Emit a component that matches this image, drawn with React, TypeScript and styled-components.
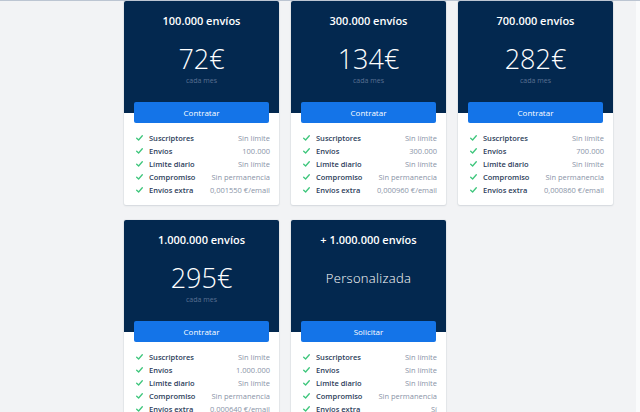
import styled, { createGlobalStyle } from "styled-components";

const GlobalStyle = createGlobalStyle`
  html, body {
    margin: 0;
    padding: 0;
    height: 100%;
    overflow: hidden;
  }
  body {
    background: linear-gradient(to right, #f2f3f5 636px, #fafbfc 636px);
    font-family: "Open Sans", "Liberation Sans", sans-serif;
    border-top: 1px solid #bcc5d2;
    box-sizing: border-box;
  }
`;

const Grid = styled.div`
  display: grid;
  grid-template-columns: repeat(3, 155px);
  column-gap: 12px;
  row-gap: 15px;
  padding-left: 124px;
`;

const Card = styled.div`
  background: #fff;
  border-radius: 2px;
  box-shadow: 0 1px 2px rgba(30, 45, 70, 0.1), 0 0 0 1px rgba(30, 45, 70, 0.04);
`;

const Header = styled.div`
  height: 112px;
  box-sizing: border-box;
  padding-top: 13px;
  background: #03284f;
  border-radius: 2px 2px 0 0;
  display: flex;
  flex-direction: column;
  align-items: center;
  color: #fff;
`;

const Title = styled.div`
  font-size: 11px;
  line-height: 14px;
  font-weight: 600;
`;

const Price = styled.div<{ $small?: boolean }>`
  margin-top: ${({ $small }) => ($small ? "22px" : "16px")};
  font-size: ${({ $small }) => ($small ? "13px" : "27px")};
  line-height: ${({ $small }) => ($small ? "18px" : "30px")};
  font-weight: 300;
  letter-spacing: ${({ $small }) => ($small ? "0.3px" : "0")};
`;

const Period = styled.div`
  margin-top: 2px;
  font-size: 7px;
  line-height: 10px;
  color: #5a7092;
`;

const Button = styled.button`
  display: block;
  width: 135px;
  height: 21px;
  margin: -11px 0 0 10px;
  border: none;
  border-radius: 2px;
  background: #1474e8;
  color: #fff;
  font-family: inherit;
  font-size: 8px;
  padding: 0;
  position: relative;
`;

const List = styled.ul`
  list-style: none;
  margin: 0;
  padding: 9px 9px 9px 12px;
`;

const Row = styled.li`
  display: flex;
  align-items: center;
  height: 12.8px;
  font-size: 7.5px;
`;

const Label = styled.span`
  margin-left: 6px;
  color: #2c3d5a;
  font-weight: 600;
`;

const Value = styled.span`
  margin-left: auto;
  color: #8a94a7;
`;

const Check = () => (
  <svg width="7" height="6" viewBox="0 0 7 6">
    <polyline
      points="0.7,3.2 2.6,5 6.3,0.8"
      fill="none"
      stroke="#3ec67c"
      strokeWidth="1.3"
      strokeLinecap="round"
      strokeLinejoin="round"
    />
  </svg>
);

type Plan = {
  title: string;
  price: string;
  custom?: boolean;
  action: string;
  values: string[];
};

const labels = [
  "Suscriptores",
  "Envíos",
  "Límite diario",
  "Compromiso",
  "Envíos extra",
];

const plans: Plan[] = [
  {
    title: "100.000 envíos",
    price: "72€",
    action: "Contratar",
    values: ["Sin límite", "100.000", "Sin límite", "Sin permanencia", "0,001550 €/email"],
  },
  {
    title: "300.000 envíos",
    price: "134€",
    action: "Contratar",
    values: ["Sin límite", "300.000", "Sin límite", "Sin permanencia", "0,000960 €/email"],
  },
  {
    title: "700.000 envíos",
    price: "282€",
    action: "Contratar",
    values: ["Sin límite", "700.000", "Sin límite", "Sin permanencia", "0,000860 €/email"],
  },
  {
    title: "1.000.000 envíos",
    price: "295€",
    action: "Contratar",
    values: ["Sin límite", "1.000.000", "Sin límite", "Sin permanencia", "0,000640 €/email"],
  },
  {
    title: "+ 1.000.000 envíos",
    price: "Personalizada",
    custom: true,
    action: "Solicitar",
    values: ["Sin límite", "Sin límite", "Sin límite", "Sin permanencia", "Sí"],
  },
];

const App = () => (
  <>
    <GlobalStyle />
    <Grid>
      {plans.map((plan) => (
        <Card key={plan.title}>
          <Header>
            <Title>{plan.title}</Title>
            <Price $small={plan.custom}>{plan.price}</Price>
            {!plan.custom && <Period>cada mes</Period>}
          </Header>
          <Button>{plan.action}</Button>
          <List>
            {labels.map((label, i) => (
              <Row key={label}>
                <Check />
                <Label>{label}</Label>
                <Value>{plan.values[i]}</Value>
              </Row>
            ))}
          </List>
        </Card>
      ))}
    </Grid>
  </>
);

export default App;
